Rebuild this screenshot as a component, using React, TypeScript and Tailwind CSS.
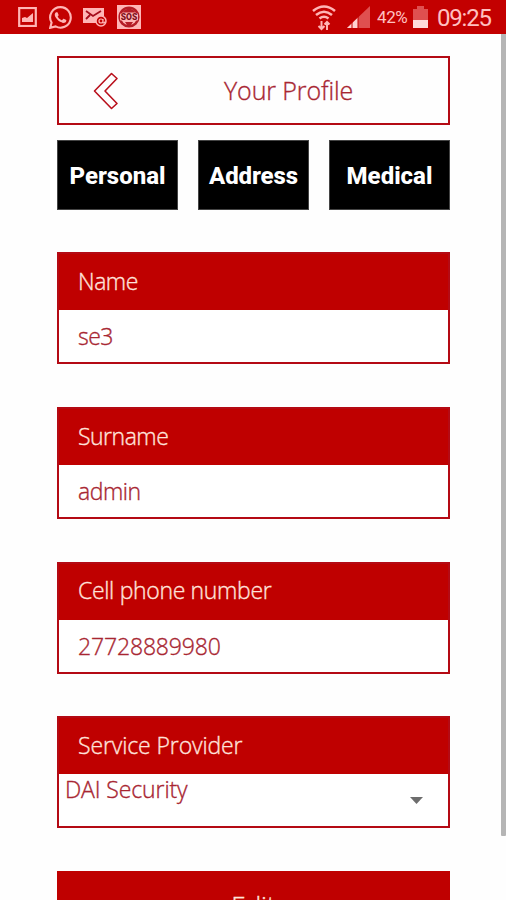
import type { ReactNode } from "react";

const light = "font-['Open_Sans','Noto_Sans',sans-serif] font-light whitespace-nowrap [-webkit-text-stroke:0.35px_currentColor]";

function StatusBar() {
  return (
    <header className="flex h-[34px] w-full shrink-0 items-center bg-[#c30000] pl-[18px] text-[#ffc0c0]">
      <svg className="h-5 w-[19px]" viewBox="0 0 19 20" fill="none">
        <rect x="1.2" y="1" width="16.6" height="18" stroke="#ffb5b5" strokeWidth="2.2" />
        <path d="M4 15V11l3-1 2 1 6-5v9z" fill="#ffb5b5" />
      </svg>
      <svg className="ml-3 h-[23px] w-[23px]" viewBox="0 0 24 24" fill="#ffb5b5">
        <path d="M17.472 14.382c-.297-.149-1.758-.867-2.03-.967-.273-.099-.471-.148-.67.15-.197.297-.767.966-.94 1.164-.173.199-.347.223-.644.075-.297-.15-1.255-.463-2.39-1.475-.883-.788-1.48-1.761-1.653-2.059-.173-.297-.018-.458.13-.606.134-.133.298-.347.446-.52.149-.174.198-.298.298-.497.099-.198.05-.371-.025-.52-.075-.149-.669-1.612-.916-2.207-.242-.579-.487-.5-.669-.51-.173-.008-.371-.01-.57-.01-.198 0-.52.074-.792.372-.272.297-1.04 1.016-1.04 2.479 0 1.462 1.065 2.875 1.213 3.074.149.198 2.096 3.2 5.077 4.487.709.306 1.262.489 1.694.625.712.227 1.36.195 1.871.118.571-.085 1.758-.719 2.006-1.413.248-.694.248-1.289.173-1.413-.074-.124-.272-.198-.57-.347" />
        <path d="M12 1.2a10.7 10.7 0 0 0-9.3 16.1L1.2 22.8l5.7-1.5A10.7 10.7 0 1 0 12 1.2z" fill="none" stroke="#ffb5b5" strokeWidth="2.2" />
      </svg>
      <svg className="ml-[11px] h-5 w-6" viewBox="0 0 24 20" fill="none">
        <path d="M0 1h21v8h-3l-4 3v4H0z" fill="#ffb5b5" />
        <path d="M3 4l7 5 8-5M3 12l4-4" stroke="#a50d1c" strokeWidth="1.8" />
        <circle cx="18" cy="14" r="5" fill="#c30000" stroke="#ffb5b5" strokeWidth="1.5" />
        <path d="M20 12v3.5c0 1 2 .5 2-1M20 14a2 2 0 1 1-4 0 2 2 0 0 1 4 0" stroke="#ffb5b5" strokeWidth="1.2" />
      </svg>
      <svg className="ml-2.5 h-6 w-6" viewBox="0 0 24 24">
        <rect width="24" height="24" fill="#ffb5b5" />
        <circle cx="12" cy="12" r="9.3" fill="none" stroke="#b51c26" strokeWidth="2.6" />
        <path d="M5.500 7.500a7.500 7.500 0 0 1 13 0zM8 17h8l-2 3h-4z" fill="#b51c26" />
        <rect x="3" y="8.500" width="18" height="7" rx="1" fill="#ffb5b5" />
        <text x="12" y="15" textAnchor="middle" className="font-['Roboto',sans-serif] text-[8.500px] font-black" fill="#7c101c">SOS</text>
      </svg>
      <svg className="ml-[171px] h-[27px] w-6" viewBox="0 0 24 27" fill="none" stroke="#ffb5b5" strokeWidth="2.6">
        <path d="M1 7q11-9 22 0M4 11q8-6.500 16 0M7.500 14.500q4.500-3.500 9 0" />
        <path d="M9.500 17v8M6.500 22l3 3 3-3M15 26v-8M12.500 20.500l2.500-2.500 2.500 2.500" strokeWidth="2" />
      </svg>
      <svg className="ml-[11px] h-[22px] w-[23px]" viewBox="0 0 23 22">
        <path d="M0 22L23 0v22z" fill="#df5050" />
        <path d="M0 22l11-10.500v10.500z" fill="#ffd2d2" />
        <path d="M5 16v6M11 10v12" stroke="#c30000" strokeWidth="1" />
      </svg>
      <span className="mt-[2px] ml-[7px] w-[32px] font-['Roboto',sans-serif] text-[17px] tracking-[-0.400px] whitespace-nowrap">42%</span>
      <svg className="ml-1 h-[22px] w-[15px]" viewBox="0 0 15 22">
        <path d="M4 0h7v3h4v19H0V3h4z" fill="#df5050" />
        <path d="M0 14h15v8H0z" fill="#ffdada" />
      </svg>
      <span className="mt-[2px] ml-[9px] font-['Roboto',sans-serif] text-[24px] tracking-[-1.200px] whitespace-nowrap">09:25</span>
    </header>
  );
}

function Field({ label, children }: { label: ReactNode; children: ReactNode }) {
  return (
    <section className="flex h-28 shrink-0 flex-col border-2 border-[#b40a14] bg-white">
      <div className="flex h-14 shrink-0 items-center bg-[#bf0000] pb-[2px] pl-[19px] text-[#ffe3dc]">{label}</div>
      {children}
    </section>
  );
}

export default function App() {
  return (
    <div className="flex h-[900px] w-[506px] flex-col overflow-hidden bg-[#fefefe]">
      <StatusBar />
      <div className="flex min-h-0 flex-1 justify-between overflow-hidden">
        <main className="ml-[57px] flex w-[393px] flex-col pt-[22px]">
          <div className="flex h-[69px] shrink-0 items-center border-2 border-[#b40a14] text-[#a82632]">
            <svg className="ml-[34px] h-[38px] w-[26px]" viewBox="0 0 26 38" fill="none" stroke="#b9101c" strokeWidth="1.6" strokeLinejoin="round">
              <path d="M1.500 19L18.500 1.500l5.500 5L12 19l12 12.500-5.500 5z" />
            </svg>
            <h1 className={`${light} ml-[105px] text-[25px] tracking-[-0.100px]`}>Your Profile</h1>
          </div>
          <nav className="mt-[15px] flex h-[70px] shrink-0 justify-between font-['Roboto',sans-serif] text-[24px] font-extrabold text-white">
            <button className="w-[121px] border border-[#444] bg-black pt-px">Personal</button>
            <button className="w-[111px] border border-[#444] bg-black pt-px tracking-[-0.100px]">Address</button>
            <button className="w-[121px] border border-[#444] bg-black pt-px">Medical</button>
          </nav>
          <div className="mt-[42px] flex flex-col gap-[42.750px]">
            <Field label={<span className={`${light} text-[23px] tracking-[-0.450px]`}>Name</span>}>
              <div className="flex flex-1 items-center pt-px pl-[19px] text-[#a82632]"><span className={`${light} text-[23px] tracking-[-0.500px]`}>se3</span></div>
            </Field>
            <Field label={<span className={`${light} text-[23px] tracking-[-0.500px]`}>Surname</span>}>
              <div className="flex flex-1 items-center pt-px pl-[19px] text-[#a82632]"><span className={`${light} text-[23px] tracking-[-0.450px]`}>admin</span></div>
            </Field>
            <Field label={<span className={`${light} text-[23px] tracking-[-0.330px]`}>Cell phone number</span>}>
              <div className="flex flex-1 items-center pt-px pl-[19px] text-[#a82632]"><span className={`${light} text-[23px] tracking-[-0.150px]`}>27728889980</span></div>
            </Field>
            <Field label={<span className={`${light} text-[23px] tracking-[-0.120px]`}>Service Provider</span>}>
              <div className="flex flex-1 items-start justify-between pr-[25px] pl-[6px] text-[#a82632]">
                <span className={`${light} text-[23px] leading-[30px] tracking-[-0.120px]`}>DAI Security</span>
                <svg className="mt-[23px] h-[7px] w-[13px]" viewBox="0 0 13 7"><path d="M0 0h13L6.500 7z" fill="#6d6d6d" /></svg>
              </div>
            </Field>
            <button className="flex h-[70px] shrink-0 justify-center bg-[#bf0000] pt-[16px] text-[#ffe3dc]"><span className={`${light} text-[26px] leading-[36px]`}>Edit</span></button>
          </div>
        </main>
        <div className="h-[802px] w-[5px] rounded-b-[1px] bg-[#b5b5b5]" />
      </div>
    </div>
  );
}
